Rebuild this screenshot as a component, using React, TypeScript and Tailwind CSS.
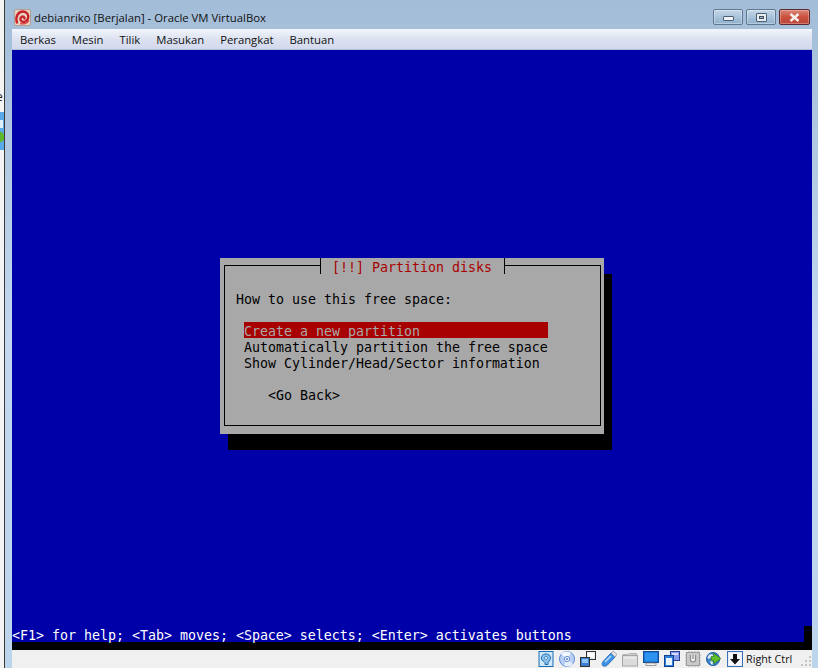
const mono = "font-['DejaVu_Sans_Mono','Liberation_Mono',monospace] text-[13.29px] leading-5 whitespace-pre tracking-normal";

function Logo() {
  return (
    <svg width="17" height="17" viewBox="0 0 17 17" className="shrink-0">
      <rect x="0.5" y="0.5" width="16" height="16" rx="1.5" fill="#e6d4c4" stroke="#b59f8e" />
      <path d="M3 13.5 C1 8 4 2.5 9 2.5 C13 2.5 15 6 14 9.5 C13 12.5 10 13.5 8 12.5 C6 11.5 6 9 7.5 8 C9 7 10.5 8 10.5 9.5" fill="none" stroke="#c8232a" strokeWidth="2.4" strokeLinecap="round" />
      <path d="M6 14.5 C9 15.5 13 14.5 15 11.5" fill="none" stroke="#d9454a" strokeWidth="1.4" />
    </svg>
  );
}

function WinButton({ kind }: { kind: "min" | "max" | "close" }) {
  if (kind === "close") {
    return (
      <div className="flex h-[16px] w-[31px] items-center justify-center rounded-[2px] border border-[#5a2a2e] bg-gradient-to-b from-[#d9857a] via-[#c9503c] to-[#b9483c] shadow-[inset_0_0_0_1px_rgba(255,220,210,0.35)]">
        <svg width="11" height="9" viewBox="0 0 11 9">
          <path d="M1.5 1 L9.5 8 M9.5 1 L1.5 8" stroke="#f4efec" strokeWidth="2.4" />
        </svg>
      </div>
    );
  }
  return (
    <div className="flex h-[16px] w-[30px] items-center justify-center rounded-[2px] border border-[#5d7890] bg-gradient-to-b from-[#c4d6e8] via-[#a9c2da] to-[#8fb0cc] shadow-[inset_0_0_0_1px_rgba(255,255,255,0.35)]">
      {kind === "min" ? (
        <div className="mt-[2px] h-[5px] w-[11px] rounded-[1px] border border-[#4d5f70] bg-[#eef1f4]" />
      ) : (
        <div className="flex h-[9px] w-[11px] items-center justify-center rounded-[1px] bg-[#e8ecf0] border border-[#4d5f70]">
          <div className="h-[3px] w-[5px] border border-[#3f5060] bg-[#9db3c6]" />
        </div>
      )}
    </div>
  );
}

function Disk() {
  return (
    <svg width="16" height="16" viewBox="0 0 16 16">
      <rect x="1" y="0.5" width="14" height="15" fill="#cfe6f7" stroke="#1a6fb5" />
      <path d="M8 3 C4.5 3 3 5.5 3.5 8 C4 10 6 10 7 11.5 L7 13.5 L10 13.5 C9 11 12.5 9.5 12.5 7 C12.5 4.5 10.5 3 8 3 Z" fill="#8cc1ea" stroke="#1a6fb5" />
      <circle cx="8" cy="7" r="1.5" fill="#fff" stroke="#1a6fb5" strokeWidth="0.7" />
    </svg>
  );
}
function Cd() {
  return (
    <svg width="16" height="16" viewBox="0 0 16 16">
      <circle cx="8" cy="8" r="7.5" fill="#b9cff5" stroke="#5b8fd8" />
      <path d="M8 8 L2 3 A7.5 7.5 0 0 1 12 2 Z" fill="#f1f6ff" />
      <path d="M8 8 L14 13 A7.5 7.5 0 0 1 5 14.5 Z" fill="#e6eefc" />
      <circle cx="8" cy="8" r="2.6" fill="#fff" stroke="#5b8fd8" />
      <circle cx="8" cy="8" r="1" fill="#4a76c4" />
    </svg>
  );
}
function Net() {
  return (
    <svg width="16" height="16" viewBox="0 0 16 16">
      <rect x="6.5" y="0.5" width="9" height="8" fill="#e8eef6" stroke="#333" />
      <rect x="8" y="2" width="6" height="4" fill="#fff" />
      <rect x="0.5" y="6.5" width="9" height="9" fill="#3c7fd0" stroke="#333" />
      <rect x="2" y="8" width="6" height="4" fill="#8cc4f5" />
    </svg>
  );
}
function Usb() {
  return (
    <svg width="16" height="16" viewBox="0 0 16 16">
      <path d="M10 2 L14 6 L6.5 14 C5 15.5 2.5 15.5 1.5 14.5 C0.8 13.5 1 11.5 2.5 10 Z" fill="#3f93e6" stroke="#1d5fae" strokeWidth="0.8" />
      <path d="M4 11 L10 5" stroke="#bfe0fb" strokeWidth="1.5" />
      <path d="M11 1 L13 0.5 L15.5 3 L15 5 L14 6 L10 2 Z" fill="#e5e7ea" stroke="#8a8f96" strokeWidth="0.7" />
    </svg>
  );
}
function Folder() {
  return (
    <svg width="16" height="16" viewBox="0 0 16 16">
      <path d="M1 3.5 L6 3.5 L7 2.5 L14.5 2.5 L14.5 4 L1 5 Z" fill="#d6d6d6" stroke="#a8a8a8" strokeWidth="0.8" />
      <rect x="0.5" y="4.5" width="15" height="10.5" fill="#dcdcdc" stroke="#a6a6a6" />
      <rect x="2" y="6" width="12" height="1.5" fill="#ececec" />
    </svg>
  );
}
function Monitor() {
  return (
    <svg width="16" height="16" viewBox="0 0 16 16">
      <rect x="0.5" y="0.5" width="15" height="11" fill="#1f78d8" stroke="#0e4c93" />
      <rect x="2" y="2" width="12" height="8" fill="#2c94ee" />
      <rect x="3" y="12" width="10" height="2.5" fill="#f0f0f0" stroke="#7a7a7a" strokeWidth="0.7" />
    </svg>
  );
}
function Windows() {
  return (
    <svg width="16" height="16" viewBox="0 0 16 16">
      <rect x="6.5" y="0.5" width="9" height="9" fill="#8a9cf0" stroke="#26408f" />
      <rect x="8" y="2" width="6" height="2" fill="#d6dcfb" />
      <rect x="0.5" y="4.5" width="9" height="11" fill="#2c7fdc" stroke="#14408d" />
      <rect x="2" y="7" width="6" height="7" fill="#e9f3fd" />
    </svg>
  );
}
function Chip() {
  return (
    <svg width="16" height="16" viewBox="0 0 16 16">
      <rect x="1.5" y="1.5" width="13" height="13" fill="#c9c9c9" stroke="#9a9a9a" />
      <path d="M0 4 H2 M0 7 H2 M0 10 H2 M0 13 H2 M14 4 H16 M14 7 H16 M14 10 H16 M14 13 H16 M4 0 V2 M7 0 V2 M10 0 V2 M13 0 V2 M4 14 V16 M7 14 V16 M10 14 V16 M13 14 V16" stroke="#a6a6a6" />
      <path d="M5.5 4 V9 C5.5 11.5 10.5 11.5 10.5 9 V4 M8 4 V8" fill="#f2f2f2" stroke="#8c8c8c" strokeWidth="1.3" />
    </svg>
  );
}
function Globe() {
  return (
    <svg width="16" height="16" viewBox="0 0 17 17">
      <circle cx="7.5" cy="8.5" r="7" fill="#3b82c9" stroke="#1f5b98" />
      <path d="M3 4 C5 3 7 3 8 5 C7 7 5 6 4 8 C3 9 2 8 1.5 7 Z M5 10 C7 10 8 12 7 15 C5 14 4 12 5 10 Z" fill="#dbe9f6" />
      <path d="M8 3.5 L16.5 9.5 L8 15.5 L8 12 L5 12 L5 7 L8 7 Z" fill="#5fbf2c" stroke="#2f7d12" strokeWidth="0.8" transform="translate(1 -0.5) scale(0.9)" />
    </svg>
  );
}
function Capture() {
  return (
    <svg width="16" height="16" viewBox="0 0 16 16">
      <rect x="0.5" y="0.5" width="15" height="15" fill="#e8edf5" stroke="#3c70b8" />
      <rect x="2" y="2" width="12" height="12" fill="#f6f8fb" />
      <path d="M6 3 H10 V8 H13 L8 13.5 L3 8 H6 Z" fill="#111" />
    </svg>
  );
}

function Grip() {
  return (
    <svg width="12" height="12" viewBox="0 0 12 12">
      <g fill="#c4c4c4">
        <rect x="9" y="0" width="2" height="2" />
        <rect x="5" y="4" width="2" height="2" />
        <rect x="9" y="4" width="2" height="2" />
        <rect x="1" y="8" width="2" height="2" />
        <rect x="5" y="8" width="2" height="2" />
        <rect x="9" y="8" width="2" height="2" />
      </g>
    </svg>
  );
}

export default function App() {
  const menus = ["Berkas", "Mesin", "Tilik", "Masukan", "Perangkat", "Bantuan"];
  const ui = "font-['Open_Sans','Noto_Sans',sans-serif]";
  return (
    <div className="flex h-[668px] w-[818px] overflow-hidden bg-white">
      {/* Desktop sliver behind the window */}
      <div className="flex h-full w-[5px] shrink-0 flex-col overflow-hidden border-r border-[#3a3a3a] bg-[#f4f4f4]">
        <div className={`mt-[89px] h-[23px] text-[12px] leading-4 -ml-[4px] text-[#222] ${ui}`}>e</div>
        <div className="relative h-[38px] bg-[#5aa9e8]">
          <div className="absolute left-0 top-[8px] h-[8px] w-[3px] bg-[#dff0fb]" />
          <div className="absolute left-0 top-[20px] h-[10px] w-[4px] rounded-r-full bg-[#5fb82c]" />
        </div>
      </div>

      {/* Window */}
      <div className="flex min-w-0 flex-1 flex-col bg-gradient-to-b from-[#a3bdd8] via-[#c3d8ee] to-[#bcd4ec]">
        <div className={`flex h-[29px] items-start justify-between pr-[8px] ${ui}`}>
          <div className="flex items-center gap-[3px] pl-[9px] pt-[9px]">
            <Logo />
            <span className="text-[11.35px] leading-4 text-[#111]">debianriko [Berjalan] - Oracle VM VirtualBox</span>
          </div>
          <div className="flex gap-[3px] pt-[9px]">
            <WinButton kind="min" />
            <WinButton kind="max" />
            <WinButton kind="close" />
          </div>
        </div>

        <div className="ml-[7px] mr-[6px] flex min-h-0 flex-1 flex-col">
          <div className={`flex h-[21px] items-center gap-[16px] border-b border-[#b4c0da] bg-gradient-to-b from-[#f2f5fb] via-[#dde2f1] to-[#d3d9ec] pl-[8px] pt-[2px] text-[11.3px] text-[#111] ${ui}`}>
            {menus.map((m) => (
              <span key={m}>{m}</span>
            ))}
          </div>

          {/* Guest screen */}
          <div className="flex h-[600px] shrink-0 flex-col bg-[#0000a8] pl-[208px] pt-[208px]">
            <div className={`relative h-[176px] w-[384px] bg-[#a8a8a8] px-[4px] pt-[7px] shadow-[8px_16px_0_#000] ${mono}`}>
              <div className="h-[161px] w-[377px] border border-black text-black">
                <div className="h-[40px] pl-[11px] pt-[24px]">How to use this free space:</div>
                <div className="ml-[19px] mt-[16px] h-4 w-[304px] bg-[#a80000] text-[#a8a8a8]">Create a new partition</div>
                <div className="ml-[19px] h-4">Automatically partition the free space</div>
                <div className="ml-[19px] h-4">Show Cylinder/Head/Sector information</div>
                <div className="ml-[43px] mt-[16px] h-4">&lt;Go Back&gt;</div>
              </div>
              <div className="absolute left-[100px] top-0 h-[16px] w-[185px] border-x border-black bg-[#a8a8a8] pl-[11px] text-[#a80000]">[!!] Partition disks</div>
            </div>
            <div className="-ml-[208px] mt-auto flex bg-black pb-[8px]">
              <div className={`h-4 w-[792px] bg-[#0000a8] text-white ${mono}`}>&lt;F1&gt; for help; &lt;Tab&gt; moves; &lt;Space&gt; selects; &lt;Enter&gt; activates buttons</div>
            </div>
          </div>

          {/* Status bar */}
          <div className="flex min-h-0 flex-1 items-center bg-[#f0f0f0] pl-[526px]">
            <div className="flex items-center gap-[5px]">
              <Disk />
              <Cd />
              <Net />
              <Usb />
              <Folder />
              <Monitor />
              <Windows />
              <Chip />
              <Globe />
              <Capture />
            </div>
            <span className={`ml-[3px] text-[10.8px] text-[#111] ${ui}`}>Right Ctrl</span>
            <div className="ml-auto self-end"><Grip /></div>
          </div>
        </div>
      </div>
    </div>
  );
}
